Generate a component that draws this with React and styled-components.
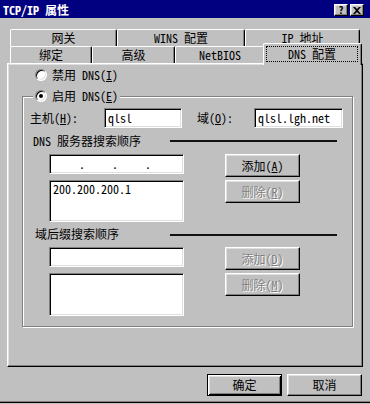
import React from 'react'
import styled, { createGlobalStyle, css } from 'styled-components'

const GlobalStyle = createGlobalStyle`
    html, body {
        margin: 0;
        padding: 0;
        background: #c0c0c0;
    }

    body {
        font-family: "Noto Sans Mono CJK SC", "Noto Sans CJK SC", sans-serif;
        font-size: 12px;
        line-height: 14px;
        color: #000;
    }

    u {
        text-decoration: underline;
        text-underline-offset: 1px;
    }
`;

const raised = css`
    border: 1px solid;
    border-color: #fff #000 #000 #fff;
    box-shadow: inset -1px -1px #808080, inset 1px 1px #dfdfdf;
`;

const sunken = css`
    border: 1px solid;
    border-color: #808080 #fff #fff #808080;
    box-shadow: inset 1px 1px #000, inset -1px -1px #dfdfdf;
    background: #fff;
`;

const Window = styled.div`
    width: 370px;
    height: 403px;
    box-sizing: border-box;
    border-bottom: 1px solid #000;
    box-shadow: inset 0 -1px #808080;
    display: flex;
    flex-direction: column;
`;

const TitleBar = styled.div`
    height: 18px;
    background: #000080;
    color: #fff;
    display: flex;
    align-items: center;
    justify-content: space-between;
    padding: 2px 6px 0 3px;
    box-sizing: border-box;

    .title {
        font-weight: bold;
        font-size: 12px;
    }

    .controls {
        display: flex;
        gap: 2px;
    }
`;

const CaptionButton = styled.div`
    width: 14px;
    height: 12px;
    box-sizing: border-box;
    background: #c0c0c0;
    color: #000;
    ${raised};
    display: flex;
    align-items: center;
    justify-content: center;
    font-weight: bold;
    font-size: 10px;
    line-height: 10px;
`;

const Body = styled.div`
    display: flex;
    flex-direction: column;
    padding: 11px 0 0 7px;
`;

const TabStrip = styled.div`
    display: flex;
    flex-direction: column;
    padding-left: 3px;
    position: relative;
    z-index: 1;
`;

const TabRow = styled.div`
    display: flex;
    align-items: flex-end;
    height: 17px;
`;

const Tab = styled.div`
    width: ${p => p.$w}px;
    height: 17px;
    box-sizing: border-box;
    border-top: 1px solid #fff;
    border-left: 1px solid #fff;
    border-right: 1px solid #000;
    border-top-left-radius: 2px;
    border-top-right-radius: 2px;
    box-shadow: inset -1px 0 #808080;
    background: #c0c0c0;
    display: flex;
    align-items: center;
    justify-content: center;
    white-space: nowrap;

    ${p => p.$selected && css`
        height: 22px;
        width: ${p.$w + 4}px;
        margin: 0 -2px -2px;
        padding: 2px 3px 3px 2px;

        span {
            flex: 1;
            align-self: stretch;
            display: flex;
            align-items: center;
            justify-content: center;
            border: 1px dotted #000;
        }
    `}
`;

const Panel = styled.div`
    width: 356px;
    height: 304px;
    box-sizing: border-box;
    border: 1px solid;
    border-color: #fff #000 #000 #fff;
    box-shadow: inset -1px -1px #808080, inset 1px 1px #dfdfdf;
    padding: 4px 0 0 0;
    display: flex;
    flex-direction: column;
`;

const RadioLine = styled.label`
    display: flex;
    align-items: center;
    gap: 5px;
    height: 14px;
    padding-left: ${p => p.$indent || 0}px;
    white-space: nowrap;
`;

const Radio = styled.span`
    width: 12px;
    height: 12px;
    box-sizing: border-box;
    border-radius: 50%;
    ${sunken};
    display: flex;
    align-items: center;
    justify-content: center;
    flex-shrink: 0;

    &::after {
        content: '';
        width: 4px;
        height: 4px;
        border-radius: 50%;
        background: ${p => (p.$checked ? '#000' : 'transparent')};
    }
`;

const Group = styled.fieldset`
    margin: 7px 0 0 14px;
    width: 331px;
    height: 238px;
    box-sizing: border-box;
    padding: 0;
    border: 1px solid #808080;
    box-shadow: inset 1px 1px #fff, 1px 1px #fff;
    min-width: 0;

    legend {
        margin-left: 10px;
        padding: 0 2px;
        height: 14px;
        background: #c0c0c0;
    }
`;

const HostRow = styled.div`
    display: grid;
    grid-template-columns: 74px 78px 15px 57px 89px;
    align-items: center;
    margin-top: 5px;
    padding-left: 7px;
    height: 20px;

    .gap {
        width: 15px;
    }
`;

const Field = styled.div`
    height: ${p => p.$h || 20}px;
    box-sizing: border-box;
    ${sunken};
    padding: ${p => (p.$list ? '1px 3px' : '0 3px')};
    display: flex;
    align-items: ${p => (p.$list ? 'flex-start' : 'center')};
    white-space: nowrap;
    overflow: hidden;
`;

const IpField = styled(Field)`
    padding: 0 0 0 2px;
    align-items: center;

    .octet {
        width: 27px;
    }

    .dot {
        width: 6px;
        text-align: center;
        line-height: 14px;
    }
`;

const SectionHead = styled.div`
    display: flex;
    align-items: center;
    height: 14px;
    margin-top: ${p => p.$top}px;
    padding-left: ${p => p.$indent}px;
    padding-right: 15px;
    white-space: nowrap;
`;

const Rule = styled.div`
    width: 167px;
    height: 2px;
    background: #111;
    margin-left: auto;
    margin-top: ${p => p.$shift || 0}px;
`;

const Entries = styled.div`
    display: grid;
    grid-template-columns: 135px 75px;
    grid-auto-rows: ${p => p.$rows};
    column-gap: 41px;
    row-gap: 3px;
    align-items: start;
    margin: 6px 0 0 26px;
`;

const Button = styled.button`
    width: 75px;
    height: ${p => p.$h || 23}px;
    box-sizing: border-box;
    background: #c0c0c0;
    font: inherit;
    color: ${p => (p.disabled ? '#808080' : '#000')};
    text-shadow: ${p => (p.disabled ? '1px 1px 0 #fff' : 'none')};
    padding: 0;
    ${raised};
    display: flex;
    align-items: center;
    justify-content: center;
    white-space: nowrap;

    ${p => p.$default && css`
        border: 1px solid #000;
        box-shadow: inset 1px 1px #fff, inset -1px -1px #000,
            inset 2px 2px #dfdfdf, inset -2px -2px #808080;
    `}
`;

const Footer = styled.div`
    display: flex;
    justify-content: flex-end;
    gap: 5px;
    margin-top: 7px;
    padding-right: 8px;
`;

function CloseGlyph() {
    return (
        <svg width="8" height="7" viewBox="0 0 8 7">
            <path d="M0 0h2l2 2 2-2h2L5 3.5 8 7H6L4 5 2 7H0l3-3.5z" fill="#000" />
        </svg>
    )
}

export default function App() {
    return (
        <>
            <GlobalStyle />
            <Window>
                <TitleBar>
                    <span className="title">TCP/IP 属性</span>
                    <div className="controls">
                        <CaptionButton>?</CaptionButton>
                        <CaptionButton><CloseGlyph /></CaptionButton>
                    </div>
                </TitleBar>
                <Body>
                    <TabStrip>
                        <TabRow>
                            <Tab $w={107}>网关</Tab>
                            <Tab $w={128}>WINS 配置</Tab>
                            <Tab $w={115}>IP 地址</Tab>
                        </TabRow>
                        <TabRow>
                            <Tab $w={82}>绑定</Tab>
                            <Tab $w={83}>高级</Tab>
                            <Tab $w={90}>NetBIOS</Tab>
                            <Tab $w={95} $selected><span>DNS 配置</span></Tab>
                        </TabRow>
                    </TabStrip>
                    <Panel>
                        <RadioLine $indent={27}>
                            <Radio />
                            <span>禁用 DNS(<u>I</u>)</span>
                        </RadioLine>
                        <Group>
                            <legend>
                                <RadioLine>
                                    <Radio $checked />
                                    <span>启用 DNS(<u>E</u>)</span>
                                </RadioLine>
                            </legend>
                            <HostRow>
                                <span>主机(<u>H</u>):</span>
                                <Field>qlsl</Field>
                                <span className="gap" />
                                <span>域(<u>O</u>):</span>
                                <Field>qlsl.lgh.net</Field>
                            </HostRow>
                            <SectionHead $top={6} $indent={10}>
                                <span>DNS 服务器搜索顺序</span>
                                <Rule />
                            </SectionHead>
                            <Entries $rows="23px 42px">
                                <IpField>
                                    <span className="octet" />
                                    <span className="dot">.</span>
                                    <span className="octet" />
                                    <span className="dot">.</span>
                                    <span className="octet" />
                                    <span className="dot">.</span>
                                </IpField>
                                <Button>添加(<u>A</u>)</Button>
                                <Field $list $h={42}>200.200.200.1</Field>
                                <Button disabled>删除(<u>R</u>)</Button>
                            </Entries>
                            <SectionHead $top={5} $indent={12}>
                                <span>域后缀搜索顺序</span>
                                <Rule $shift={2} />
                            </SectionHead>
                            <Entries $rows="23px 43px">
                                <Field />
                                <Button disabled>添加(<u>D</u>)</Button>
                                <Field $list $h={43} />
                                <Button disabled>删除(<u>M</u>)</Button>
                            </Entries>
                        </Group>
                    </Panel>
                    <Footer>
                        <Button $default $h={22}>确定</Button>
                        <Button $h={22}>取消</Button>
                    </Footer>
                </Body>
            </Window>
        </>
    )
}
